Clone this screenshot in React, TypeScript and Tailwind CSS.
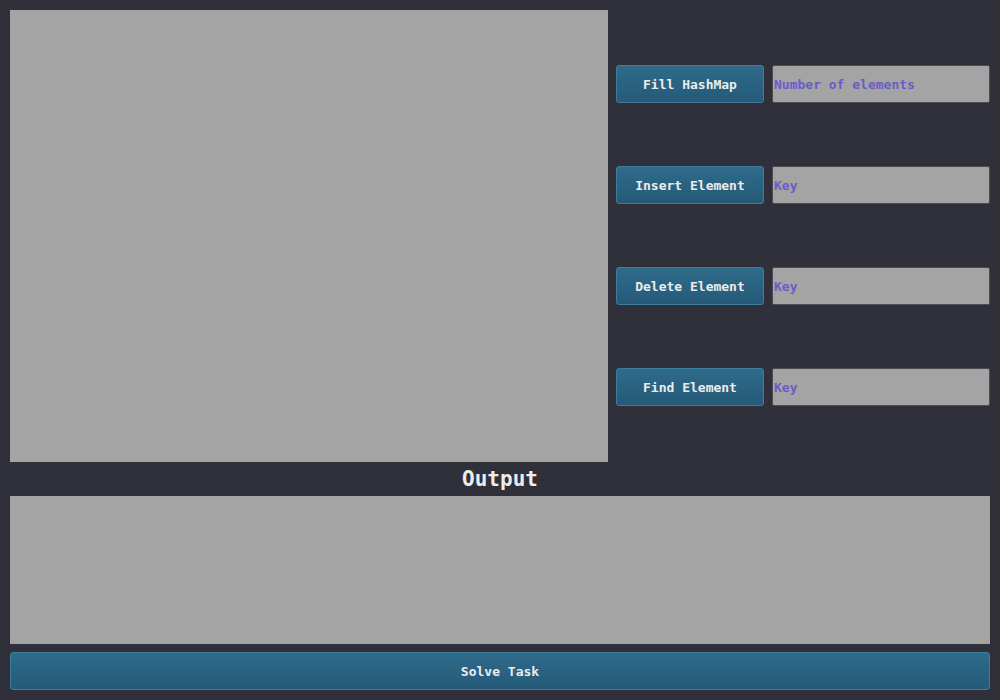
import React from 'react';

const ROWS = [
  { label: 'Fill HashMap', placeholder: 'Number of elements' },
  { label: 'Insert Element', placeholder: 'Key' },
  { label: 'Delete Element', placeholder: 'Key' },
  { label: 'Find Element', placeholder: 'Key' },
];

const mono = { fontFamily: '"DejaVu Sans Mono", "Liberation Mono", monospace' };

function ActionButton({ label, className = '' }: { label: string; className?: string }) {
  return (
    <button
      className={`h-[38px] rounded-[3px] border border-[#3f7d9c] bg-gradient-to-b from-[#2f6b8b] to-[#255a78] pt-[2px] text-[13px] font-bold text-[#ececec] ${className}`}
      style={mono}
    >
      {label}
    </button>
  );
}

export default function App() {
  return (
    <div className="h-[700px] w-[1000px] bg-[#30303a] p-[10px]" style={mono}>
      <div className="flex h-[452px] gap-2">
        <div className="w-[598px] bg-[#a4a4a4]" />
        <div className="flex flex-1 flex-col gap-[63px] pt-[55px]">
          {ROWS.map((row) => (
            <div key={row.label} className="flex gap-2">
              <ActionButton label={row.label} className="w-[148px]" />
              <input
                placeholder={row.placeholder}
                className="h-[38px] flex-1 rounded-[2px] border border-[#4c4c54] bg-[#a4a4a4] px-[1px] pt-[1px] text-[13px] font-bold text-[#333] outline-none placeholder:text-[#6a5cc8]"
                style={mono}
              />
            </div>
          ))}
        </div>
      </div>
      <div className="flex h-[34px] items-center justify-center pt-[1px]">
        <span className="text-[21px] font-bold leading-none text-[#ececec]">Output</span>
      </div>
      <div className="h-[148px] bg-[#a4a4a4]" />
      <ActionButton label="Solve Task" className="mt-2 w-full" />
    </div>
  );
}
